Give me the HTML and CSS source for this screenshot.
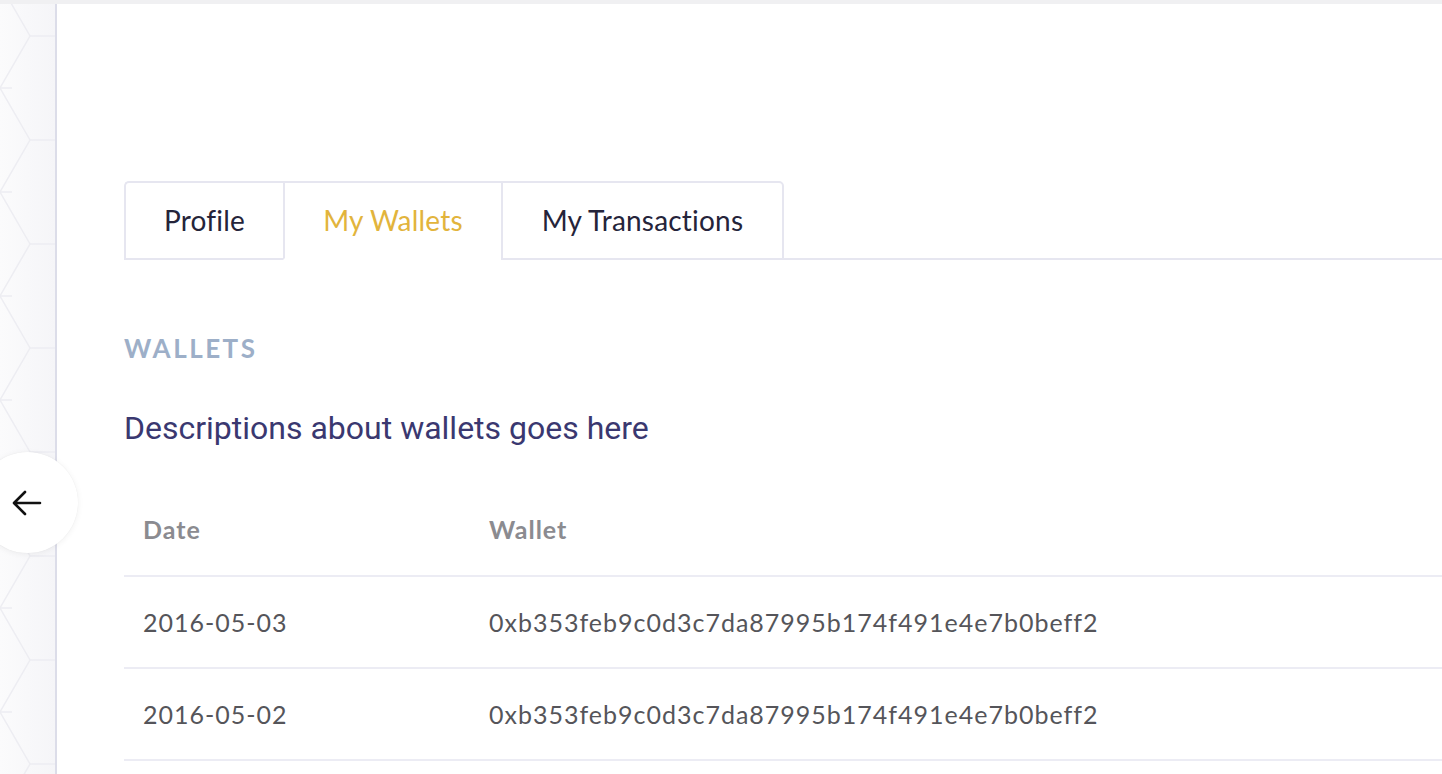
FILE: index.html
```html
<!DOCTYPE html>
<html>
<head>
<meta charset="utf-8">
<link rel="stylesheet" href="styles.css">
</head>
<body>
<div class="topbar"></div>
<div class="layout">
  <aside class="sidebar">
    <svg class="hex" width="55" height="770" viewBox="0 0 55 770">
      <g fill="none" stroke="#ededf2" stroke-width="1.5">
        <path d="M0 -20 L30 32 L0 84 L30 136 L0 188 L30 240 L0 292 L30 344 L0 396 L30 448 L0 500 L30 552 L0 604 L30 656 L0 708 L30 760 L0 812"/>
        <path d="M30 32 H55 M30 136 H55 M30 240 H55 M30 344 H55 M30 448 H55 M30 552 H55 M30 656 H55 M30 760 H55"/>
        <path d="M0 84 H12 M0 188 H12 M0 292 H12 M0 396 H12 M0 500 H12 M0 604 H12 M0 708 H12"/>
      </g>
    </svg>
  </aside>
  <main class="main">
    <nav class="tabs">
      <div class="tab first">Profile</div>
      <div class="tab active">My Wallets</div>
      <div class="tab last">My Transactions</div>
      <div class="tab-fill"></div>
    </nav>
    <section class="panel">
      <h2 class="section-title">WALLETS</h2>
      <p class="description">Descriptions about wallets goes here</p>
      <table class="wallets">
        <thead>
          <tr><th class="col-date">Date</th><th>Wallet</th></tr>
        </thead>
        <tbody>
          <tr><td>2016-05-03</td><td>0xb353feb9c0d3c7da87995b174f491e4e7b0beff2</td></tr>
          <tr><td>2016-05-02</td><td>0xb353feb9c0d3c7da87995b174f491e4e7b0beff2</td></tr>
        </tbody>
      </table>
    </section>
  </main>
</div>
<button class="back" aria-label="Back">
  <svg width="30" height="26" viewBox="0 0 30 26">
    <path d="M28 13 H3 M13 2 L2 13 L13 24" fill="none" stroke="#111" stroke-width="2.6" stroke-linecap="round" stroke-linejoin="round"/>
  </svg>
</button>
</body>
</html>
```

FILE: styles.css
```css
html, body {
  margin: 0;
  padding: 0;
  background: #ffffff;
  overflow: hidden;
}
body {
  width: 1442px;
  height: 774px;
  font-family: "Lato", "Open Sans", sans-serif;
}
.topbar {
  height: 4px;
  background: #f0f0f2;
}
.layout {
  display: flex;
  height: 770px;
}
.sidebar {
  width: 55px;
  flex: none;
  background: linear-gradient(to right, #fbfbfc, #f5f5f8);
  border-right: 2px solid #dcdde9;
  overflow: hidden;
}
.hex {
  display: block;
}
.main {
  flex: 1;
  padding: 177px 0 0 67px;
  min-width: 0;
}
.tabs {
  display: flex;
  align-items: stretch;
  height: 79px;
}
.tab {
  box-sizing: border-box;
  padding: 0 0 2px 0;
  display: flex;
  align-items: center;
  justify-content: center;
  font-size: 28px;
  letter-spacing: 0.2px;
  color: #25243a;
  border-top: 2px solid #e6e6f0;
  border-left: 2px solid #e6e6f0;
  border-bottom: 2px solid #e6e6f0;
  background: #fff;
  white-space: nowrap;
}
.tab.first {
  border-top-left-radius: 5px;
  width: 159px;
}
.tab.active {
  color: #e2b43c;
  border-bottom-color: transparent;
  width: 218px;
}
.tab.last {
  border-right: 2px solid #e6e6f0;
  border-top-right-radius: 5px;
  width: 283px;
}
.tab-fill {
  flex: 1;
  border-bottom: 2px solid #e6e6f0;
}
.panel {
  padding-top: 73px;
}
.section-title {
  margin: 0;
  font-size: 26px;
  font-weight: 700;
  letter-spacing: 2.5px;
  color: #9dafc8;
  line-height: 30px;
}
.description {
  margin: 48px 0 0;
  font-family: "Roboto", sans-serif;
  font-size: 32px;
  color: #3a3870;
  line-height: 34px;
}
.wallets {
  margin-top: 38px;
  width: 100%;
  border-collapse: collapse;
}
.wallets th,
.wallets td {
  text-align: left;
  padding: 0 0 0 19px;
  border-bottom: 2px solid #ececf4;
  letter-spacing: 1px;
}
.wallets th {
  height: 92px;
  font-size: 25px;
  font-weight: 700;
  color: #8b8b90;
}
.wallets td {
  height: 90px;
  font-size: 25px;
  color: #55555a;
}
.col-date {
  width: 327px;
}
.back {
  position: absolute;
  left: -23px;
  top: 452px;
  width: 101px;
  height: 101px;
  border-radius: 50%;
  border: none;
  background: #fff;
  box-shadow: 0 1px 6px rgba(0,0,0,0.06), 0 0 1px rgba(0,0,0,0.08);
  display: flex;
  align-items: center;
  justify-content: flex-end;
  padding: 0 36px 0 0;
}
.back svg {
  display: block;
}
```
